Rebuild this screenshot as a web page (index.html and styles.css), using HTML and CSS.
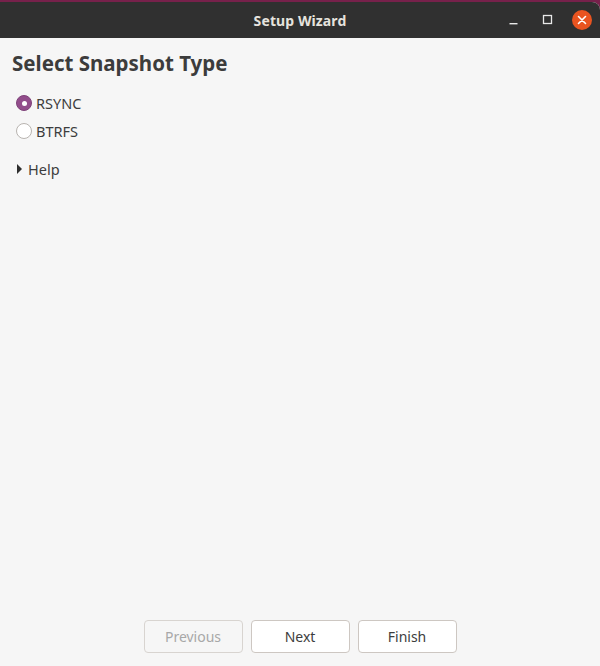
FILE: index.html
```html
<!DOCTYPE html>
<html>
<head>
<meta charset="utf-8">
<link rel="stylesheet" href="styles.css">
</head>
<body>
<div class="desktop">
  <div class="window">
    <div class="titlebar">
      <div class="title">Setup Wizard</div>
      <div class="controls">
        <span class="ctl min"><svg width="12" height="12" viewBox="0 0 12 12"><rect x="1.5" y="9" width="8" height="1.4" fill="#e8e8e8"/></svg></span>
        <span class="ctl max"><svg width="12" height="12" viewBox="0 0 12 12"><rect x="1.5" y="1.5" width="8" height="8" fill="none" stroke="#e8e8e8" stroke-width="1.3"/></svg></span>
        <span class="ctl close"><svg width="20" height="20" viewBox="0 0 20 20"><circle cx="10" cy="10" r="10" fill="#e95420"/><path d="M6.5 6.5 L13.5 13.5 M13.5 6.5 L6.5 13.5" stroke="#fff" stroke-width="1.6" stroke-linecap="round"/></svg></span>
      </div>
    </div>
    <div class="content">
      <h1 class="heading">Select Snapshot Type</h1>
      <div class="options">
        <label class="radio-row"><span class="radio checked"></span><span class="label">RSYNC</span></label>
        <label class="radio-row"><span class="radio"></span><span class="label">BTRFS</span></label>
      </div>
      <div class="expander"><span class="arrow"></span><span class="label">Help</span></div>
    </div>
    <div class="footer">
      <button class="btn disabled">Previous</button>
      <button class="btn">Next</button>
      <button class="btn">Finish</button>
    </div>
  </div>
</div>
</body>
</html>
```

FILE: styles.css
```css
html, body {
  margin: 0;
  padding: 0;
  width: 600px;
  height: 666px;
  overflow: hidden;
  font-family: "Noto Sans", "Open Sans", sans-serif;
}
.desktop {
  width: 600px;
  height: 666px;
  background: #77214b;
  padding-top: 2px;
  box-sizing: border-box;
}
.window {
  height: 664px;
  display: flex;
  flex-direction: column;
  background: #f6f6f6;
  border-top-right-radius: 8px;
  overflow: hidden;
}
.titlebar {
  height: 36px;
  background: #303030;
  position: relative;
  display: flex;
  align-items: center;
  justify-content: center;
  flex-shrink: 0;
}
.title {
  color: #e6e3de;
  font-weight: 700;
  font-size: 14px;
  letter-spacing: 0.1px;
}
.controls {
  position: absolute;
  right: 8px;
  top: 0;
  height: 36px;
  display: flex;
  align-items: center;
}
.ctl {
  display: flex;
  align-items: center;
  justify-content: center;
}
.min { width: 12px; margin-right: 22px; }
.max { width: 12px; margin-right: 18px; }
.close { width: 20px; }
.content {
  flex: 1;
  padding: 12px 12px 0 12px;
  color: #3d3d3d;
}
.heading {
  margin: 0;
  font-size: 20.5px;
  font-weight: 700;
  color: #3c3c3c;
  line-height: 26px;
}
.options {
  margin-top: 19px;
  display: flex;
  flex-direction: column;
  gap: 12px;
}
.radio-row {
  display: flex;
  align-items: center;
  height: 16px;
  padding-left: 4px;
}
.radio {
  width: 16px;
  height: 16px;
  border-radius: 50%;
  border: 1px solid #b8b4b0;
  background: #fff;
  box-sizing: border-box;
  margin-right: 4px;
  position: relative;
}
.radio.checked {
  background: #924d8b;
  border-color: #7e4279;
}
.radio.checked::after {
  content: "";
  position: absolute;
  left: 4.5px;
  top: 4.5px;
  width: 5px;
  height: 5px;
  border-radius: 50%;
  background: #fff;
}
.label {
  font-size: 14.5px;
  color: #3d3d3d;
}
.expander {
  margin-top: 22px;
  display: flex;
  align-items: center;
  height: 16px;
  padding-left: 5px;
}
.arrow {
  width: 0;
  height: 0;
  border-left: 5px solid #2e2e2e;
  border-top: 5px solid transparent;
  border-bottom: 5px solid transparent;
  margin-right: 6px;
}
.expander .label {
  color: #3d3d3d;
  font-size: 14.5px;
}
.footer {
  display: flex;
  justify-content: center;
  gap: 8px;
  padding: 0 0 13px 0;
  flex-shrink: 0;
}
.btn {
  width: 99px;
  height: 33px;
  border: 1px solid #cdc7c2;
  border-radius: 4px;
  background: #ffffff;
  color: #3d3d3d;
  font-family: "Noto Sans", "Open Sans", sans-serif;
  font-size: 14px;
  padding: 0;
}
.btn.disabled {
  background: #f6f6f6;
  color: #a8a8a8;
  border-color: #d8d4d0;
}
```
